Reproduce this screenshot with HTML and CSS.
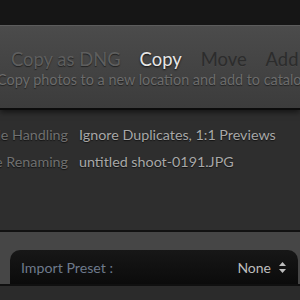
FILE: index.html
```html
<!DOCTYPE html>
<html lang="en">
<head>
    <meta charset="UTF-8">
    <title>Import</title>
    <link rel="stylesheet" href="styles.css">
</head>
<body>
    <div class="topbar"></div>

    <div class="modes">
        <div class="tabs">
            <span class="tab">Copy as DNG</span>
            <span class="tab active">Copy</span>
            <span class="tab dim">Move</span>
            <span class="tab dim">Add</span>
        </div>
        <p class="hint">Copy photos to a new location and add to catalog</p>
    </div>

    <div class="summary">
        <div class="row">
            <div class="label"><span>File Handling</span></div>
            <div class="value">Ignore Duplicates, 1:1 Previews</div>
        </div>
        <div class="row">
            <div class="label"><span>File Renaming</span></div>
            <div class="value">untitled shoot-0191.JPG</div>
        </div>
    </div>

    <div class="bottom">
        <div class="preset">
            <span class="preset-label">Import Preset :</span>
            <span class="preset-value">None
                <svg class="updown" width="7" height="11" viewBox="0 0 7 11">
                    <path d="M3.5 0 L7 4 H0 Z" fill="#bdbdbd"/>
                    <path d="M3.5 11 L7 7 H0 Z" fill="#bdbdbd"/>
                </svg>
            </span>
        </div>
    </div>
    <div class="footer"></div>
</body>
</html>
```

FILE: styles.css
```css
* {
    margin: 0;
    padding: 0;
    box-sizing: border-box;
}

html, body {
    width: 300px;
    height: 300px;
    overflow: hidden;
}

body {
    background: #2e2e2e;
    font-family: 'Lato', sans-serif;
    display: flex;
    flex-direction: column;
}

.topbar {
    height: 25px;
    background: #161616;
    flex-shrink: 0;
}

.modes {
    height: 83px;
    flex-shrink: 0;
    border-top: 1px solid #5c5c5c;
    background: linear-gradient(#4b4b4b, #3c3c3c);
    padding-top: 22px;
    box-shadow: 0 2px 0 #0c0c0c, 0 4px 6px rgba(0, 0, 0, 0.6);
    position: relative;
    z-index: 1;
    overflow: hidden;
}

.tabs {
    display: flex;
    gap: 19px;
    padding-left: 11px;
    white-space: nowrap;
    line-height: 22px;
}

.tab {
    font-size: 18.4px;
    color: #5e5e5e;
    text-shadow: 0 1px 1px rgba(0, 0, 0, 0.5);
}

.tab.active {
    color: #e6e6e6;
    text-shadow: 0 1px 2px rgba(0, 0, 0, 0.8);
}

.tab.dim {
    color: #2c2c2c;
    text-shadow: 0 1px 0 rgba(255, 255, 255, 0.04);
}

.hint {
    margin: 1px 0 0 -3px;
    font-size: 14.4px;
    line-height: 18px;
    color: #6c6c6c;
    white-space: nowrap;
    text-shadow: 0 1px 1px rgba(0, 0, 0, 0.5);
}

.summary {
    height: 122px;
    flex-shrink: 0;
    padding-top: 18px;
    display: flex;
    flex-direction: column;
    gap: 9px;
}

.row {
    display: flex;
    gap: 11px;
    font-size: 14.3px;
    line-height: 18px;
    white-space: nowrap;
    text-shadow: 0 1px 1px rgba(0, 0, 0, 0.6);
}

.label {
    width: 68px;
    display: flex;
    justify-content: flex-end;
    color: #707070;
}

.value {
    color: #a8a8a8;
}

.bottom {
    height: 54px;
    flex-shrink: 0;
    border-top: 2px solid #121212;
    background: #464646;
    padding: 18px 2px 0 10px;
    display: flex;
    flex-direction: column;
    justify-content: flex-end;
}

.preset {
    height: 34px;
    background: linear-gradient(#171717, #0b0b0b);
    border-radius: 10px 10px 0 0;
    display: flex;
    align-items: center;
    justify-content: space-between;
    padding: 0 12px 0 11px;
    font-size: 14.2px;
}

.preset-label {
    color: #6e7a8c;
}

.preset-value {
    color: #bcbcbc;
    font-size: 14px;
    display: flex;
    align-items: center;
    gap: 8px;
}

.footer {
    flex: 1;
    border-top: 2px solid #101010;
    background: #2b2b2b;
}
```
